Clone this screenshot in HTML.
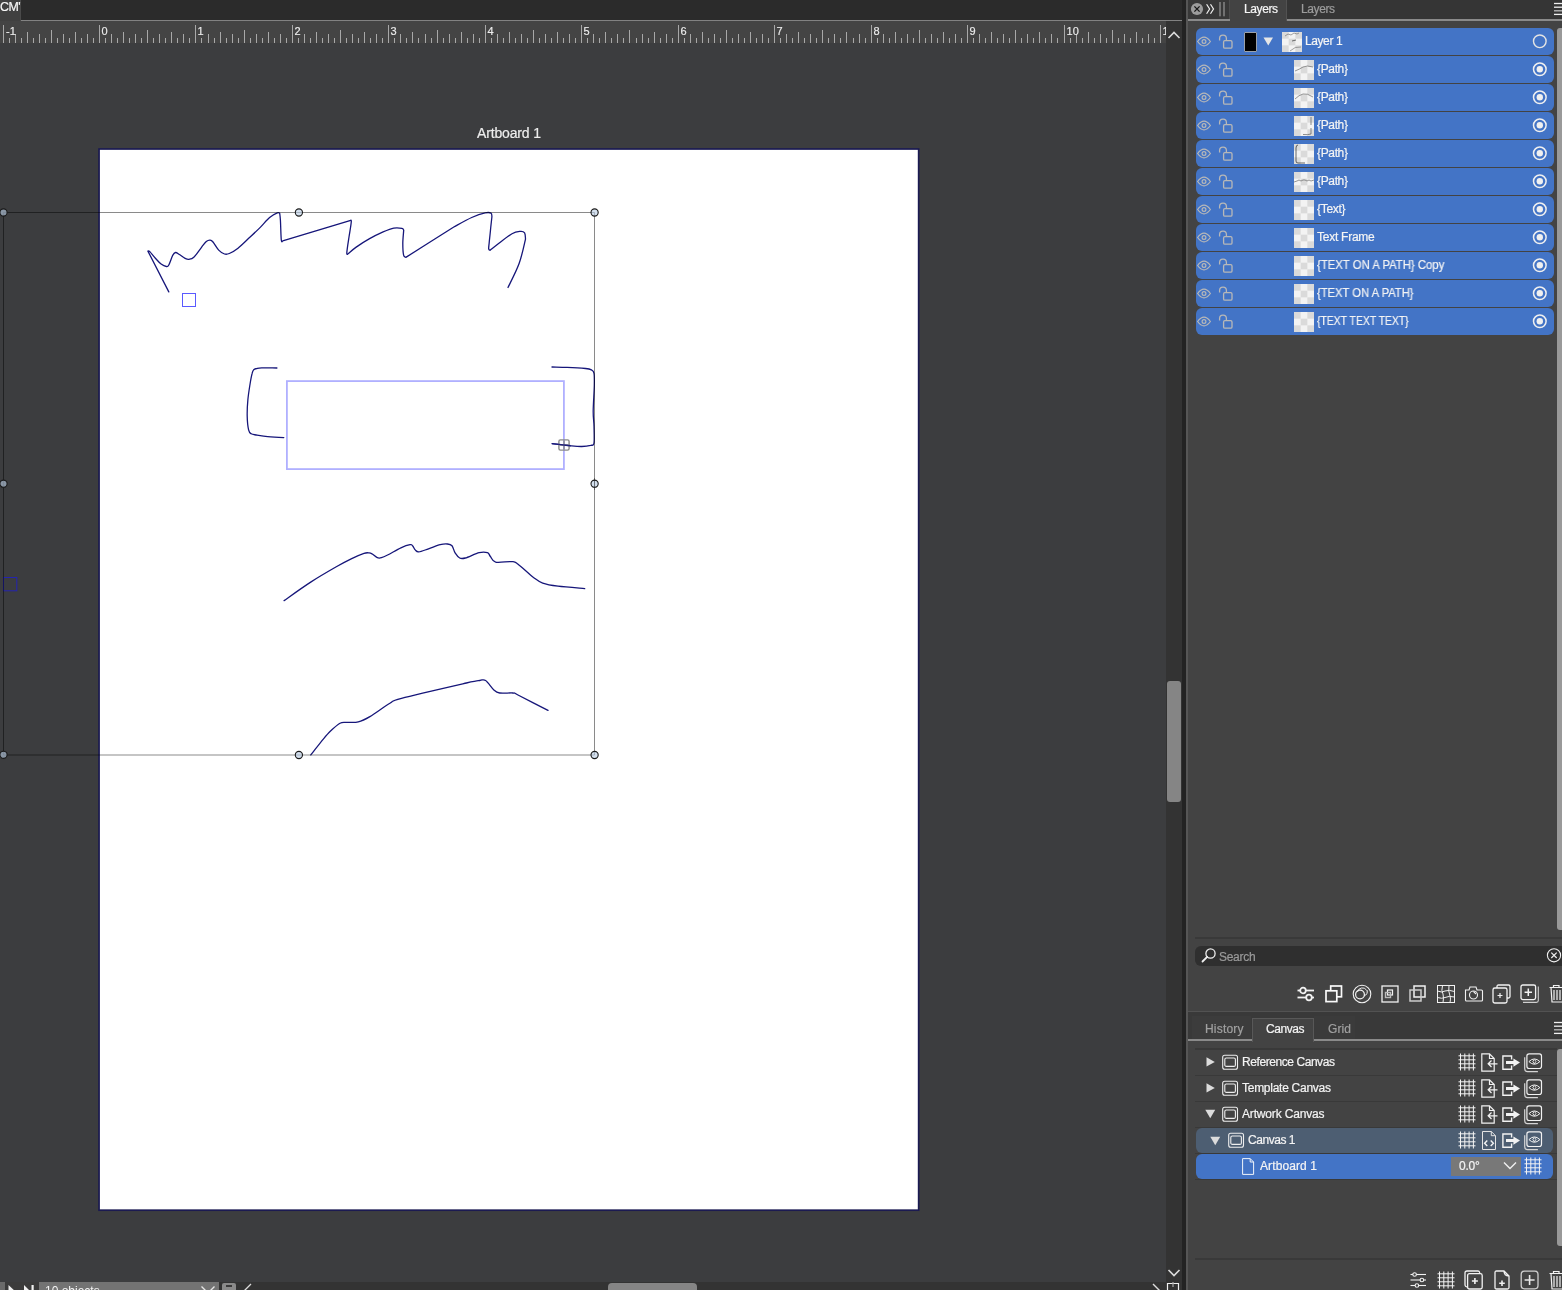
<!DOCTYPE html>
<html><head><meta charset="utf-8"><title>Vector editor</title>
<style>
html,body{margin:0;padding:0;width:1562px;height:1290px;overflow:hidden;background:#3c3d3f;font-family:"Liberation Sans",sans-serif;}
.a{position:absolute}
.lrow{position:absolute;left:1196px;width:358px;height:27px;background:#4374c6;border-radius:6px}
.tx{will-change:transform}
.lt{will-change:transform;-webkit-text-stroke:0.2px currentColor;position:absolute;height:27px;line-height:27px;font-size:12px;color:#f4f4f4;white-space:pre}
</style></head><body>
<!-- canvas area -->
<div class="a" style="left:0;top:0;width:1182px;height:20px;background:#2b2b2b"></div>
<div class="a" style="left:0;top:0;width:20px;height:21px;background:#404040;border-right:1px solid #4a4a4a"></div>
<div class="a tx" style="left:0;top:0;height:20px;line-height:15px;font-size:12.4px;color:#f6f6f6;letter-spacing:-0.45px;-webkit-text-stroke:0.2px #f6f6f6">CM'</div>
<div class="a" style="left:21px;top:20px;width:1161px;height:1px;background:#828282"></div>
<div class="a" style="left:0;top:21px;width:1166px;height:22px;background:#444444"></div>
<div class="a" style="left:0;top:43px;width:1166px;height:1239px;background:#3c3d3f;overflow:hidden">
  <div class="a" style="left:0;top:-43px;width:1166px;height:1282px"><svg width="1166" height="1282" style="position:absolute;left:0;top:0">
<rect x="99.05" y="149" width="819.6" height="1061.2" fill="#fff" stroke="#1b1a52" stroke-width="1.7"/>
<g fill="none" stroke="#16167a" stroke-width="1.3" stroke-linejoin="round" stroke-linecap="round">
<path d="M168.8 291.9 L147.9 251.1 C148.2 251.2 148.3 250.2 149.6 251.4 C150.8 252.6 153.5 256.2 155.4 258.3 C157.3 260.4 159.3 262.7 161.1 264.1 C162.9 265.5 165.1 266.4 166.4 266.5 C167.7 266.6 167.8 266.9 168.8 265.0 C169.9 263.1 171.6 257.5 172.7 255.4 C173.8 253.3 174.4 252.7 175.5 252.5 C176.6 252.3 177.8 253.5 179.4 254.5 C181.0 255.5 183.5 257.5 185.1 258.3 C186.7 259.1 187.6 259.5 189.0 259.3 C190.4 259.1 191.7 259.3 193.8 257.3 C195.9 255.3 199.4 249.9 201.5 247.3 C203.6 244.7 204.9 242.7 206.3 241.5 C207.7 240.3 209.0 240.0 210.1 240.1 C211.2 240.2 211.6 240.3 213.0 242.0 C214.4 243.7 216.8 248.1 218.7 250.1 C220.6 252.1 222.7 253.4 224.5 254.0 C226.3 254.6 227.1 254.5 229.3 253.5 C231.6 252.5 234.5 251.0 238.0 248.2 C241.5 245.4 246.7 240.1 250.4 236.7 C254.1 233.3 256.8 230.8 260.0 227.6 C263.2 224.4 266.7 219.9 269.6 217.5 C272.5 215.1 275.6 213.6 277.3 212.9 C279.0 212.2 279.3 213.1 279.7 213.2 C279.8 214.3 280.1 215.5 280.4 220.0 C280.7 224.5 280.9 236.5 281.3 240.0 C281.7 243.5 282.5 240.8 282.7 240.9 L349.9 220.7 C350.1 220.8 351.4 218.9 351.3 221.6 C351.2 224.3 349.8 231.8 349.0 237.0 C348.2 242.2 346.9 250.2 346.8 253.0 C346.7 255.8 347.9 253.7 348.1 253.8 C349.5 252.7 352.6 249.6 356.2 247.1 C359.8 244.6 365.1 241.1 369.6 238.6 C374.1 236.1 379.1 233.7 383.1 231.9 C387.1 230.2 390.7 228.7 393.8 228.1 C396.9 227.5 400.2 228.0 401.9 228.3 C403.5 228.6 403.4 229.8 403.7 230.1 C403.6 232.3 402.8 239.3 402.8 243.5 C402.8 247.7 403.1 252.9 403.6 255.2 C404.1 257.5 405.4 257.0 405.8 257.4 L426.9 244.0 L453.8 227.0 C456.8 225.4 466.5 219.8 471.7 217.5 C476.9 215.2 481.9 213.6 485.1 212.9 C488.3 212.2 489.9 212.5 491.0 213.1 C492.1 213.7 491.8 216.1 491.9 216.7 C491.7 218.9 490.9 225.7 490.5 230.0 C490.1 234.3 489.5 239.4 489.2 242.6 C488.9 245.8 488.5 247.6 488.7 248.9 C488.9 250.2 489.9 250.1 490.1 250.3 C491.5 249.2 495.0 246.3 498.6 243.5 C502.2 240.7 508.4 235.7 512.0 233.7 C515.6 231.7 518.0 231.6 520.1 231.4 C522.2 231.2 523.7 231.5 524.6 232.8 C525.5 234.1 525.4 238.1 525.5 239.1 C524.5 243.1 522.1 255.2 519.2 263.3 C516.3 271.4 509.9 283.5 508.0 287.5"/>
<path d="M276.9 368.0 C274.4 368.0 265.1 367.7 261.7 367.8 C258.3 367.9 257.8 368.3 256.5 368.6 C255.2 368.9 254.5 368.9 253.8 369.7 C253.1 370.5 252.8 370.6 252.2 373.2 C251.5 375.8 250.6 380.6 249.9 385.0 C249.2 389.4 248.4 394.3 247.9 399.5 C247.4 404.7 247.1 410.9 247.2 416.0 C247.3 421.1 247.9 426.8 248.6 429.8 C249.3 432.8 249.8 432.9 251.2 433.8 C252.6 434.7 254.4 434.6 257.1 435.1 C259.9 435.6 263.2 436.3 267.7 436.7 C272.1 437.1 281.1 437.5 283.8 437.6"/>
<path d="M552.0 367.0 C554.5 367.1 561.5 367.1 567.1 367.4 C572.7 367.6 581.5 368.1 585.5 368.5 C589.5 368.9 590.0 369.1 591.4 369.9 C592.8 370.7 593.5 370.6 594.0 373.3 C594.5 376.0 594.4 379.4 594.3 385.8 C594.2 392.2 593.2 404.8 593.2 411.5 C593.2 418.2 593.9 421.0 594.0 426.3 C594.1 431.6 594.5 440.0 594.0 443.2 C593.5 446.4 592.7 444.8 590.7 445.4 C588.7 445.9 585.1 446.4 581.8 446.5 C578.5 446.6 575.8 446.3 570.8 445.8 C565.8 445.3 555.1 444.0 552.0 443.6"/>
<path d="M284.1 600.6 C288.5 597.5 302.0 587.7 310.7 582.1 C319.4 576.5 329.5 570.7 336.3 566.8 C343.1 562.9 347.1 560.8 351.7 558.6 C356.3 556.4 361.1 554.4 364.0 553.4 C366.9 552.4 367.7 552.8 369.1 552.9 C370.5 553.0 370.8 553.2 372.2 554.0 C373.6 554.8 375.8 557.1 377.3 557.7 C378.8 558.3 379.7 558.2 381.4 557.7 C383.1 557.2 384.4 556.6 387.6 555.0 C390.9 553.4 397.1 549.5 400.9 547.8 C404.6 546.1 408.2 545.0 410.1 544.7 C412.1 544.4 411.8 544.9 412.6 545.8 C413.5 546.7 414.2 548.9 415.2 549.9 C416.2 550.9 416.6 552.1 418.8 551.9 C421.0 551.7 424.9 550.0 428.5 548.8 C432.1 547.6 437.1 545.5 440.2 544.7 C443.3 543.9 445.4 543.8 447.4 544.0 C449.4 544.2 450.7 544.3 452.0 545.8 C453.3 547.3 453.8 550.9 455.1 552.9 C456.4 554.9 458.0 557.1 459.7 558.0 C461.4 558.9 462.1 558.9 465.3 558.0 C468.6 557.1 475.5 553.5 479.2 552.6 C482.9 551.7 485.5 552.0 487.4 552.6 C489.3 553.2 489.0 554.9 490.4 556.5 C491.8 558.1 492.0 561.2 495.6 562.1 C499.2 563.0 508.2 561.2 512.0 561.6 C515.8 562.0 514.5 561.6 518.1 564.2 C521.7 566.9 529.4 574.4 533.5 577.5 C537.6 580.6 538.6 581.6 542.7 583.1 C546.8 584.6 551.0 585.3 558.0 586.2 C565.0 587.1 580.2 588.2 584.7 588.6"/>
<path d="M310.8 754.9 C312.9 752.3 320.0 743.1 323.3 739.1 C326.6 735.1 328.0 733.4 330.8 730.8 C333.6 728.2 337.4 724.7 340.0 723.3 C342.6 721.9 343.6 722.6 346.6 722.4 C349.7 722.2 354.4 722.9 358.3 721.9 C362.2 720.9 364.6 719.7 369.9 716.6 C375.2 713.5 384.6 706.3 389.9 703.3 C395.2 700.2 388.8 701.7 401.5 698.3 C414.2 694.9 453.3 686.0 466.4 683.0 C479.4 680.0 476.6 680.9 479.8 680.5 C483.0 680.1 483.2 678.9 485.6 680.5 C488.0 682.1 491.5 687.9 493.9 690.0 C496.2 692.1 496.5 692.5 499.7 693.0 C502.9 693.5 509.9 692.7 513.0 693.0 C516.0 693.3 512.2 692.1 518.0 695.0 C523.8 697.9 543.0 707.8 548.0 710.4"/>
</g>
<rect x="286.9" y="381.1" width="277" height="88" fill="none" stroke="#b0b0ff" stroke-width="1.8"/>
<rect x="182.5" y="293.5" width="13" height="13" fill="none" stroke="#5a5aff" stroke-width="1"/>
<rect x="3.5" y="577.5" width="13.3" height="13.3" fill="none" stroke="#2424b0" stroke-width="1"/>
<g fill="none" stroke="rgba(0,0,0,0.46)" stroke-width="1">
<line x1="3.5" y1="212.5" x2="594.5" y2="212.5"/>
<line x1="3.5" y1="755" x2="594.5" y2="755"/>
<line x1="3.5" y1="212.5" x2="3.5" y2="755"/>
<line x1="594.5" y1="212.5" x2="594.5" y2="755"/>
</g>
<g stroke="#1a1a1a" stroke-width="1.1" fill="rgba(185,205,228,0.62)">
<circle cx="3.5" cy="212.5" r="3.6"/><circle cx="298.9" cy="212.5" r="3.6"/><circle cx="594.6" cy="212.5" r="3.6"/>
<circle cx="3.5" cy="483.7" r="3.6"/><circle cx="594.6" cy="483.7" r="3.6"/>
<circle cx="3.5" cy="754.8" r="3.6"/><circle cx="298.9" cy="755" r="3.6"/><circle cx="594.6" cy="755" r="3.6"/>
</g>
<line x1="594.5" y1="478" x2="594.5" y2="490" stroke="rgba(0,0,0,0.35)" stroke-width="1"/>
<g fill="none" stroke="#8a8a8a" stroke-width="1.4"><rect x="558.9" y="439.9" width="10.2" height="10.2" rx="1.5"/><line x1="564" y1="440.5" x2="564" y2="449.5"/><line x1="559.5" y1="445" x2="568.5" y2="445"/></g>
<path d="M552 443.6 C556 444 560 444.5 570.8 445.8" fill="none" stroke="#16167a" stroke-width="1.4" opacity="0.9"/>
</svg></div>
  <div class="a tx" style="left:477px;top:82px;font-size:14px;line-height:16px;color:#ededed;letter-spacing:-0.15px;-webkit-text-stroke:0.2px #ededed">Artboard 1</div>
</div>
<svg class="a tx" style="left:0;top:0" width="1166" height="43"><g stroke="#a8a8a8" stroke-width="1"><line x1="3.5" y1="25" x2="3.5" y2="43"/><line x1="9.5" y1="38" x2="9.5" y2="43"/><line x1="15.5" y1="34" x2="15.5" y2="43"/><line x1="21.5" y1="38" x2="21.5" y2="43"/><line x1="27.5" y1="32" x2="27.5" y2="43"/><line x1="33.5" y1="38" x2="33.5" y2="43"/><line x1="39.5" y1="34" x2="39.5" y2="43"/><line x1="45.5" y1="38" x2="45.5" y2="43"/><line x1="51.5" y1="30" x2="51.5" y2="43"/><line x1="57.5" y1="38" x2="57.5" y2="43"/><line x1="63.5" y1="34" x2="63.5" y2="43"/><line x1="69.5" y1="38" x2="69.5" y2="43"/><line x1="75.5" y1="32" x2="75.5" y2="43"/><line x1="81.5" y1="38" x2="81.5" y2="43"/><line x1="87.5" y1="34" x2="87.5" y2="43"/><line x1="93.5" y1="38" x2="93.5" y2="43"/><line x1="99.5" y1="25" x2="99.5" y2="43"/><line x1="105.5" y1="38" x2="105.5" y2="43"/><line x1="111.5" y1="34" x2="111.5" y2="43"/><line x1="117.5" y1="38" x2="117.5" y2="43"/><line x1="123.5" y1="32" x2="123.5" y2="43"/><line x1="129.5" y1="38" x2="129.5" y2="43"/><line x1="135.5" y1="34" x2="135.5" y2="43"/><line x1="141.5" y1="38" x2="141.5" y2="43"/><line x1="147.5" y1="30" x2="147.5" y2="43"/><line x1="153.5" y1="38" x2="153.5" y2="43"/><line x1="159.5" y1="34" x2="159.5" y2="43"/><line x1="165.5" y1="38" x2="165.5" y2="43"/><line x1="171.5" y1="32" x2="171.5" y2="43"/><line x1="177.5" y1="38" x2="177.5" y2="43"/><line x1="183.5" y1="34" x2="183.5" y2="43"/><line x1="189.5" y1="38" x2="189.5" y2="43"/><line x1="195.5" y1="25" x2="195.5" y2="43"/><line x1="201.5" y1="38" x2="201.5" y2="43"/><line x1="208.5" y1="34" x2="208.5" y2="43"/><line x1="214.5" y1="38" x2="214.5" y2="43"/><line x1="220.5" y1="32" x2="220.5" y2="43"/><line x1="226.5" y1="38" x2="226.5" y2="43"/><line x1="232.5" y1="34" x2="232.5" y2="43"/><line x1="238.5" y1="38" x2="238.5" y2="43"/><line x1="244.5" y1="30" x2="244.5" y2="43"/><line x1="250.5" y1="38" x2="250.5" y2="43"/><line x1="256.5" y1="34" x2="256.5" y2="43"/><line x1="262.5" y1="38" x2="262.5" y2="43"/><line x1="268.5" y1="32" x2="268.5" y2="43"/><line x1="274.5" y1="38" x2="274.5" y2="43"/><line x1="280.5" y1="34" x2="280.5" y2="43"/><line x1="286.5" y1="38" x2="286.5" y2="43"/><line x1="292.5" y1="25" x2="292.5" y2="43"/><line x1="298.5" y1="38" x2="298.5" y2="43"/><line x1="304.5" y1="34" x2="304.5" y2="43"/><line x1="310.5" y1="38" x2="310.5" y2="43"/><line x1="316.5" y1="32" x2="316.5" y2="43"/><line x1="322.5" y1="38" x2="322.5" y2="43"/><line x1="328.5" y1="34" x2="328.5" y2="43"/><line x1="334.5" y1="38" x2="334.5" y2="43"/><line x1="340.5" y1="30" x2="340.5" y2="43"/><line x1="346.5" y1="38" x2="346.5" y2="43"/><line x1="352.5" y1="34" x2="352.5" y2="43"/><line x1="358.5" y1="38" x2="358.5" y2="43"/><line x1="364.5" y1="32" x2="364.5" y2="43"/><line x1="370.5" y1="38" x2="370.5" y2="43"/><line x1="376.5" y1="34" x2="376.5" y2="43"/><line x1="382.5" y1="38" x2="382.5" y2="43"/><line x1="388.5" y1="25" x2="388.5" y2="43"/><line x1="394.5" y1="38" x2="394.5" y2="43"/><line x1="400.5" y1="34" x2="400.5" y2="43"/><line x1="406.5" y1="38" x2="406.5" y2="43"/><line x1="412.5" y1="32" x2="412.5" y2="43"/><line x1="418.5" y1="38" x2="418.5" y2="43"/><line x1="425.5" y1="34" x2="425.5" y2="43"/><line x1="431.5" y1="38" x2="431.5" y2="43"/><line x1="437.5" y1="30" x2="437.5" y2="43"/><line x1="443.5" y1="38" x2="443.5" y2="43"/><line x1="449.5" y1="34" x2="449.5" y2="43"/><line x1="455.5" y1="38" x2="455.5" y2="43"/><line x1="461.5" y1="32" x2="461.5" y2="43"/><line x1="467.5" y1="38" x2="467.5" y2="43"/><line x1="473.5" y1="34" x2="473.5" y2="43"/><line x1="479.5" y1="38" x2="479.5" y2="43"/><line x1="485.5" y1="25" x2="485.5" y2="43"/><line x1="491.5" y1="38" x2="491.5" y2="43"/><line x1="497.5" y1="34" x2="497.5" y2="43"/><line x1="503.5" y1="38" x2="503.5" y2="43"/><line x1="509.5" y1="32" x2="509.5" y2="43"/><line x1="515.5" y1="38" x2="515.5" y2="43"/><line x1="521.5" y1="34" x2="521.5" y2="43"/><line x1="527.5" y1="38" x2="527.5" y2="43"/><line x1="533.5" y1="30" x2="533.5" y2="43"/><line x1="539.5" y1="38" x2="539.5" y2="43"/><line x1="545.5" y1="34" x2="545.5" y2="43"/><line x1="551.5" y1="38" x2="551.5" y2="43"/><line x1="557.5" y1="32" x2="557.5" y2="43"/><line x1="563.5" y1="38" x2="563.5" y2="43"/><line x1="569.5" y1="34" x2="569.5" y2="43"/><line x1="575.5" y1="38" x2="575.5" y2="43"/><line x1="581.5" y1="25" x2="581.5" y2="43"/><line x1="587.5" y1="38" x2="587.5" y2="43"/><line x1="593.5" y1="34" x2="593.5" y2="43"/><line x1="599.5" y1="38" x2="599.5" y2="43"/><line x1="605.5" y1="32" x2="605.5" y2="43"/><line x1="611.5" y1="38" x2="611.5" y2="43"/><line x1="617.5" y1="34" x2="617.5" y2="43"/><line x1="623.5" y1="38" x2="623.5" y2="43"/><line x1="629.5" y1="30" x2="629.5" y2="43"/><line x1="636.5" y1="38" x2="636.5" y2="43"/><line x1="642.5" y1="34" x2="642.5" y2="43"/><line x1="648.5" y1="38" x2="648.5" y2="43"/><line x1="654.5" y1="32" x2="654.5" y2="43"/><line x1="660.5" y1="38" x2="660.5" y2="43"/><line x1="666.5" y1="34" x2="666.5" y2="43"/><line x1="672.5" y1="38" x2="672.5" y2="43"/><line x1="678.5" y1="25" x2="678.5" y2="43"/><line x1="684.5" y1="38" x2="684.5" y2="43"/><line x1="690.5" y1="34" x2="690.5" y2="43"/><line x1="696.5" y1="38" x2="696.5" y2="43"/><line x1="702.5" y1="32" x2="702.5" y2="43"/><line x1="708.5" y1="38" x2="708.5" y2="43"/><line x1="714.5" y1="34" x2="714.5" y2="43"/><line x1="720.5" y1="38" x2="720.5" y2="43"/><line x1="726.5" y1="30" x2="726.5" y2="43"/><line x1="732.5" y1="38" x2="732.5" y2="43"/><line x1="738.5" y1="34" x2="738.5" y2="43"/><line x1="744.5" y1="38" x2="744.5" y2="43"/><line x1="750.5" y1="32" x2="750.5" y2="43"/><line x1="756.5" y1="38" x2="756.5" y2="43"/><line x1="762.5" y1="34" x2="762.5" y2="43"/><line x1="768.5" y1="38" x2="768.5" y2="43"/><line x1="774.5" y1="25" x2="774.5" y2="43"/><line x1="780.5" y1="38" x2="780.5" y2="43"/><line x1="786.5" y1="34" x2="786.5" y2="43"/><line x1="792.5" y1="38" x2="792.5" y2="43"/><line x1="798.5" y1="32" x2="798.5" y2="43"/><line x1="804.5" y1="38" x2="804.5" y2="43"/><line x1="810.5" y1="34" x2="810.5" y2="43"/><line x1="816.5" y1="38" x2="816.5" y2="43"/><line x1="822.5" y1="30" x2="822.5" y2="43"/><line x1="828.5" y1="38" x2="828.5" y2="43"/><line x1="834.5" y1="34" x2="834.5" y2="43"/><line x1="840.5" y1="38" x2="840.5" y2="43"/><line x1="846.5" y1="32" x2="846.5" y2="43"/><line x1="853.5" y1="38" x2="853.5" y2="43"/><line x1="859.5" y1="34" x2="859.5" y2="43"/><line x1="865.5" y1="38" x2="865.5" y2="43"/><line x1="871.5" y1="25" x2="871.5" y2="43"/><line x1="877.5" y1="38" x2="877.5" y2="43"/><line x1="883.5" y1="34" x2="883.5" y2="43"/><line x1="889.5" y1="38" x2="889.5" y2="43"/><line x1="895.5" y1="32" x2="895.5" y2="43"/><line x1="901.5" y1="38" x2="901.5" y2="43"/><line x1="907.5" y1="34" x2="907.5" y2="43"/><line x1="913.5" y1="38" x2="913.5" y2="43"/><line x1="919.5" y1="30" x2="919.5" y2="43"/><line x1="925.5" y1="38" x2="925.5" y2="43"/><line x1="931.5" y1="34" x2="931.5" y2="43"/><line x1="937.5" y1="38" x2="937.5" y2="43"/><line x1="943.5" y1="32" x2="943.5" y2="43"/><line x1="949.5" y1="38" x2="949.5" y2="43"/><line x1="955.5" y1="34" x2="955.5" y2="43"/><line x1="961.5" y1="38" x2="961.5" y2="43"/><line x1="967.5" y1="25" x2="967.5" y2="43"/><line x1="973.5" y1="38" x2="973.5" y2="43"/><line x1="979.5" y1="34" x2="979.5" y2="43"/><line x1="985.5" y1="38" x2="985.5" y2="43"/><line x1="991.5" y1="32" x2="991.5" y2="43"/><line x1="997.5" y1="38" x2="997.5" y2="43"/><line x1="1003.5" y1="34" x2="1003.5" y2="43"/><line x1="1009.5" y1="38" x2="1009.5" y2="43"/><line x1="1015.5" y1="30" x2="1015.5" y2="43"/><line x1="1021.5" y1="38" x2="1021.5" y2="43"/><line x1="1027.5" y1="34" x2="1027.5" y2="43"/><line x1="1033.5" y1="38" x2="1033.5" y2="43"/><line x1="1039.5" y1="32" x2="1039.5" y2="43"/><line x1="1045.5" y1="38" x2="1045.5" y2="43"/><line x1="1051.5" y1="34" x2="1051.5" y2="43"/><line x1="1057.5" y1="38" x2="1057.5" y2="43"/><line x1="1064.5" y1="25" x2="1064.5" y2="43"/><line x1="1070.5" y1="38" x2="1070.5" y2="43"/><line x1="1076.5" y1="34" x2="1076.5" y2="43"/><line x1="1082.5" y1="38" x2="1082.5" y2="43"/><line x1="1088.5" y1="32" x2="1088.5" y2="43"/><line x1="1094.5" y1="38" x2="1094.5" y2="43"/><line x1="1100.5" y1="34" x2="1100.5" y2="43"/><line x1="1106.5" y1="38" x2="1106.5" y2="43"/><line x1="1112.5" y1="30" x2="1112.5" y2="43"/><line x1="1118.5" y1="38" x2="1118.5" y2="43"/><line x1="1124.5" y1="34" x2="1124.5" y2="43"/><line x1="1130.5" y1="38" x2="1130.5" y2="43"/><line x1="1136.5" y1="32" x2="1136.5" y2="43"/><line x1="1142.5" y1="38" x2="1142.5" y2="43"/><line x1="1148.5" y1="34" x2="1148.5" y2="43"/><line x1="1154.5" y1="38" x2="1154.5" y2="43"/><line x1="1160.5" y1="25" x2="1160.5" y2="43"/></g><g fill="#ededed" stroke="#ededed" stroke-width="0.15" font-family="Liberation Sans" font-size="11"><text x="6.0" y="35">-1</text><text x="101.6" y="35">0</text><text x="197.6" y="35">1</text><text x="294.6" y="35">2</text><text x="390.6" y="35">3</text><text x="487.6" y="35">4</text><text x="583.6" y="35">5</text><text x="680.6" y="35">6</text><text x="776.6" y="35">7</text><text x="873.6" y="35">8</text><text x="969.6" y="35">9</text><text x="1066.6" y="35">10</text><text x="1162.6" y="35">11</text></g></svg>
<!-- vertical scrollbar -->
<div class="a" style="left:1166px;top:21px;width:16px;height:1261px;background:#333333"></div>
<svg class="a" style="left:1167px;top:30px" width="14" height="10"><path d="M1.5 8 L7 2.5 L12.5 8" fill="none" stroke="#dcdcdc" stroke-width="1.6"/></svg>
<svg class="a" style="left:1167px;top:1268px" width="14" height="10"><path d="M1.5 2 L7 7.5 L12.5 2" fill="none" stroke="#dcdcdc" stroke-width="1.6"/></svg>
<div class="a" style="left:1167px;top:681px;width:14px;height:121px;background:#858585;border-radius:3px"></div>
<!-- status bar -->
<div class="a" style="left:0;top:1282px;width:1182px;height:8px;background:#333333"></div>
<div class="a" style="left:0;top:1282px;width:5px;height:8px;background:#6a6a6a"></div>
<div class="a" style="left:5px;top:1282px;width:34px;height:8px;background:#3b3b3b"></div>
<svg class="a" style="left:6px;top:1282px" width="32" height="8"><path d="M2.5 3 L10 10 L2.5 17Z" fill="#f0f0f0"/><path d="M18 3 L25 10 L18 17Z" fill="#f0f0f0"/><rect x="25.5" y="3" width="2.2" height="8" fill="#f0f0f0"/></svg>
<div class="a" style="left:39px;top:1282px;width:180px;height:8px;background:#737373;overflow:hidden"><div class="a tx" style="left:6px;top:2px;font-size:12px;line-height:14px;color:#f4f4f4">10 objects</div></div>
<svg class="a" style="left:200px;top:1284px" width="16" height="6"><path d="M1.5 2.5 L8 9 L14.5 2.5" fill="none" stroke="#e6e6e6" stroke-width="1.4"/></svg>
<div class="a" style="left:222px;top:1283px;width:14px;height:7px;background:#8a8a8a;border-radius:2px 2px 0 0"></div>
<div class="a" style="left:226px;top:1285px;width:6px;height:2px;background:#3a3a3a"></div>
<svg class="a" style="left:242px;top:1283px" width="10" height="7"><path d="M1 9 L9 1" stroke="#dcdcdc" stroke-width="1.3"/></svg>
<div class="a" style="left:608px;top:1283px;width:89px;height:7px;background:#858585;border-radius:4px 4px 0 0"></div>
<svg class="a" style="left:1150px;top:1282px" width="32" height="8"><path d="M3 2 L10 9" stroke="#dcdcdc" stroke-width="1.4"/><g fill="none" stroke="#f0f0f0" stroke-width="1.2"><path d="M17.5 8 V1.5 H28.5 V8"/><path d="M23 0 V5" stroke="#aaa"/></g></svg>
<!-- dividers -->
<div class="a" style="left:1182px;top:0;width:4px;height:1290px;background:#232323"></div>
<div class="a" style="left:1186px;top:0;width:2px;height:1290px;background:#565656"></div>
<!-- right panel -->
<div class="a" style="left:1188px;top:0;width:374px;height:1290px;background:#434343"></div>
<div class="a" style="left:1188px;top:0;width:374px;height:19px;background:#353535"></div>
<div class="a" style="left:1188px;top:0;width:41px;height:19px;background:#383838;border-right:1px solid #4c4c4c"></div>
<div class="a" style="left:1188px;top:19px;width:42px;height:2px;background:#8a8a8a"></div>
<div class="a" style="left:1287px;top:19px;width:275px;height:2px;background:#8a8a8a"></div>
<div class="a" style="left:1230px;top:0;width:56px;height:21px;background:#434343"></div>
<div class="a" style="left:1286px;top:0;width:1px;height:21px;background:#525252"></div>
<svg class="a" style="left:1190px;top:2px" width="38" height="16"><circle cx="7" cy="7" r="6.1" fill="#9c9c9c"/><path d="M4.4 4.4 L9.6 9.6 M9.6 4.4 L4.4 9.6" stroke="#151515" stroke-width="1.3"/><path d="M16.6 2.3 L19.6 7 L16.6 11.7 M20.5 2.3 L23.5 7 L20.5 11.7" fill="none" stroke="#f0f0f0" stroke-width="1.2"/><rect x="29" y="0" width="2" height="14.3" fill="#717171"/><rect x="33" y="0" width="2" height="14.3" fill="#717171"/></svg>
<div class="lt" style="left:1244px;top:0;height:18px;line-height:18px;color:#f6f6f6;letter-spacing:-0.4px">Layers</div>
<div class="lt" style="left:1301px;top:0;height:18px;line-height:18px;color:#9c9c9c;letter-spacing:-0.4px">Layers</div>
<svg class="a" style="left:1554px;top:2px" width="8" height="14"><g stroke="#f0f0f0" stroke-width="1.3"><line x1="0" y1="1.5" x2="8" y2="1.5"/><line x1="0" y1="5.2" x2="8" y2="5.2"/><line x1="0" y1="8.8" x2="8" y2="8.8" stroke="#bdbdbd"/><line x1="0" y1="12.4" x2="8" y2="12.4"/></g></svg>
<div class="lrow" style="top:28px"></div><svg style="position:absolute;left:1197px;top:34px" width="15" height="15" viewBox="0 0 15 15"><g fill="none" stroke="#b8b8b8" stroke-width="1.2"><path d="M0.6 7.5 Q7 -1.3 13.4 7.5 Q7 16.3 0.6 7.5Z"/><circle cx="7" cy="7.5" r="1.9"/></g></svg><svg style="position:absolute;left:1218px;top:34px" width="16" height="16" viewBox="0 0 16 16"><g fill="none" stroke="#b8b8b8" stroke-width="1.3"><path d="M1.6 6.6 V4.6 A3.4 3.4 0 0 1 8.4 4.6 V6.2"/><rect x="5.6" y="6.6" width="8.4" height="7.6" rx="1.3"/></g></svg><div style="position:absolute;left:1244px;top:31.5px;width:11px;height:18px;background:#000;border:1px solid #9aa0a8;border-radius:1px"></div><svg style="position:absolute;left:1263px;top:37px" width="11" height="9"><path d="M0.5 0.5 H10 L5.25 8.5Z" fill="#e6e6e6"/></svg><svg style="position:absolute;left:1282px;top:31.5px" width="20" height="20"><rect width="20" height="20" fill="#f3f3f3"/><rect x="0.00" y="0.00" width="6.67" height="6.67" fill="#dadada"/><rect x="0.00" y="13.34" width="6.67" height="6.67" fill="#dadada"/><rect x="6.67" y="6.67" width="6.67" height="6.67" fill="#dadada"/><rect x="13.34" y="0.00" width="6.67" height="6.67" fill="#dadada"/><rect x="13.34" y="13.34" width="6.67" height="6.67" fill="#dadada"/><g opacity="0.75"><path d="M3 4 L6 2 L9 3 L12 1 L15 2 L17 1" stroke="#555" stroke-width="0.7" fill="none"/><path d="M10 9 L14 8" stroke="#444" stroke-width="1" fill="none"/><path d="M8 19 Q13 14 19 15" stroke="#555" stroke-width="0.7" fill="none"/></g></svg><div class="lt" style="left:1305px;top:28px;letter-spacing:-0.41px">Layer 1</div><svg style="position:absolute;left:1532px;top:34px" width="16" height="16"><circle cx="7.8" cy="7.3" r="6.3" fill="none" stroke="#e4e4e4" stroke-width="1.4"/></svg><div class="lrow" style="top:56px"></div><svg style="position:absolute;left:1197px;top:62px" width="15" height="15" viewBox="0 0 15 15"><g fill="none" stroke="#b8b8b8" stroke-width="1.2"><path d="M0.6 7.5 Q7 -1.3 13.4 7.5 Q7 16.3 0.6 7.5Z"/><circle cx="7" cy="7.5" r="1.9"/></g></svg><svg style="position:absolute;left:1218px;top:62px" width="16" height="16" viewBox="0 0 16 16"><g fill="none" stroke="#b8b8b8" stroke-width="1.3"><path d="M1.6 6.6 V4.6 A3.4 3.4 0 0 1 8.4 4.6 V6.2"/><rect x="5.6" y="6.6" width="8.4" height="7.6" rx="1.3"/></g></svg><svg style="position:absolute;left:1294px;top:60px" width="20" height="20"><rect width="20" height="20" fill="#f3f3f3"/><rect x="0.00" y="0.00" width="6.67" height="6.67" fill="#dadada"/><rect x="0.00" y="13.34" width="6.67" height="6.67" fill="#dadada"/><rect x="6.67" y="6.67" width="6.67" height="6.67" fill="#dadada"/><rect x="13.34" y="0.00" width="6.67" height="6.67" fill="#dadada"/><rect x="13.34" y="13.34" width="6.67" height="6.67" fill="#dadada"/><g opacity="0.75"><path d="M1 11 Q6 9 9 7 Q13 5 19 7" stroke="#555" stroke-width="0.8" fill="none"/></g></svg><div class="lt" style="left:1317px;top:56px;letter-spacing:-0.35px">{Path}</div><svg style="position:absolute;left:1532px;top:62px" width="16" height="16"><circle cx="7.8" cy="7.3" r="6.3" fill="none" stroke="#f0f0f0" stroke-width="1.5"/><circle cx="7.8" cy="7.3" r="3.2" fill="#f0f0f0"/></svg><div class="lrow" style="top:84px"></div><svg style="position:absolute;left:1197px;top:90px" width="15" height="15" viewBox="0 0 15 15"><g fill="none" stroke="#b8b8b8" stroke-width="1.2"><path d="M0.6 7.5 Q7 -1.3 13.4 7.5 Q7 16.3 0.6 7.5Z"/><circle cx="7" cy="7.5" r="1.9"/></g></svg><svg style="position:absolute;left:1218px;top:90px" width="16" height="16" viewBox="0 0 16 16"><g fill="none" stroke="#b8b8b8" stroke-width="1.3"><path d="M1.6 6.6 V4.6 A3.4 3.4 0 0 1 8.4 4.6 V6.2"/><rect x="5.6" y="6.6" width="8.4" height="7.6" rx="1.3"/></g></svg><svg style="position:absolute;left:1294px;top:88px" width="20" height="20"><rect width="20" height="20" fill="#f3f3f3"/><rect x="0.00" y="0.00" width="6.67" height="6.67" fill="#dadada"/><rect x="0.00" y="13.34" width="6.67" height="6.67" fill="#dadada"/><rect x="6.67" y="6.67" width="6.67" height="6.67" fill="#dadada"/><rect x="13.34" y="0.00" width="6.67" height="6.67" fill="#dadada"/><rect x="13.34" y="13.34" width="6.67" height="6.67" fill="#dadada"/><g opacity="0.75"><path d="M1 11 Q5 7 9 6 Q13 5 19 9" stroke="#555" stroke-width="0.8" fill="none"/></g></svg><div class="lt" style="left:1317px;top:84px;letter-spacing:-0.35px">{Path}</div><svg style="position:absolute;left:1532px;top:90px" width="16" height="16"><circle cx="7.8" cy="7.3" r="6.3" fill="none" stroke="#f0f0f0" stroke-width="1.5"/><circle cx="7.8" cy="7.3" r="3.2" fill="#f0f0f0"/></svg><div class="lrow" style="top:112px"></div><svg style="position:absolute;left:1197px;top:118px" width="15" height="15" viewBox="0 0 15 15"><g fill="none" stroke="#b8b8b8" stroke-width="1.2"><path d="M0.6 7.5 Q7 -1.3 13.4 7.5 Q7 16.3 0.6 7.5Z"/><circle cx="7" cy="7.5" r="1.9"/></g></svg><svg style="position:absolute;left:1218px;top:118px" width="16" height="16" viewBox="0 0 16 16"><g fill="none" stroke="#b8b8b8" stroke-width="1.3"><path d="M1.6 6.6 V4.6 A3.4 3.4 0 0 1 8.4 4.6 V6.2"/><rect x="5.6" y="6.6" width="8.4" height="7.6" rx="1.3"/></g></svg><svg style="position:absolute;left:1294px;top:116px" width="20" height="20"><rect width="20" height="20" fill="#f3f3f3"/><rect x="0.00" y="0.00" width="6.67" height="6.67" fill="#dadada"/><rect x="0.00" y="13.34" width="6.67" height="6.67" fill="#dadada"/><rect x="6.67" y="6.67" width="6.67" height="6.67" fill="#dadada"/><rect x="13.34" y="0.00" width="6.67" height="6.67" fill="#dadada"/><rect x="13.34" y="13.34" width="6.67" height="6.67" fill="#dadada"/><g opacity="0.75"><path d="M17 1 V9 M17 12 V18 Q14 19 9 18.5" stroke="#444" stroke-width="0.8" fill="none"/></g></svg><div class="lt" style="left:1317px;top:112px;letter-spacing:-0.35px">{Path}</div><svg style="position:absolute;left:1532px;top:118px" width="16" height="16"><circle cx="7.8" cy="7.3" r="6.3" fill="none" stroke="#f0f0f0" stroke-width="1.5"/><circle cx="7.8" cy="7.3" r="3.2" fill="#f0f0f0"/></svg><div class="lrow" style="top:140px"></div><svg style="position:absolute;left:1197px;top:146px" width="15" height="15" viewBox="0 0 15 15"><g fill="none" stroke="#b8b8b8" stroke-width="1.2"><path d="M0.6 7.5 Q7 -1.3 13.4 7.5 Q7 16.3 0.6 7.5Z"/><circle cx="7" cy="7.5" r="1.9"/></g></svg><svg style="position:absolute;left:1218px;top:146px" width="16" height="16" viewBox="0 0 16 16"><g fill="none" stroke="#b8b8b8" stroke-width="1.3"><path d="M1.6 6.6 V4.6 A3.4 3.4 0 0 1 8.4 4.6 V6.2"/><rect x="5.6" y="6.6" width="8.4" height="7.6" rx="1.3"/></g></svg><svg style="position:absolute;left:1294px;top:144px" width="20" height="20"><rect width="20" height="20" fill="#f3f3f3"/><rect x="0.00" y="0.00" width="6.67" height="6.67" fill="#dadada"/><rect x="0.00" y="13.34" width="6.67" height="6.67" fill="#dadada"/><rect x="6.67" y="6.67" width="6.67" height="6.67" fill="#dadada"/><rect x="13.34" y="0.00" width="6.67" height="6.67" fill="#dadada"/><rect x="13.34" y="13.34" width="6.67" height="6.67" fill="#dadada"/><g opacity="0.75"><path d="M4 1 Q2 1 2 4 V17 Q2 19 4 19 H11" stroke="#222" stroke-width="0.9" fill="none"/></g></svg><div class="lt" style="left:1317px;top:140px;letter-spacing:-0.35px">{Path}</div><svg style="position:absolute;left:1532px;top:146px" width="16" height="16"><circle cx="7.8" cy="7.3" r="6.3" fill="none" stroke="#f0f0f0" stroke-width="1.5"/><circle cx="7.8" cy="7.3" r="3.2" fill="#f0f0f0"/></svg><div class="lrow" style="top:168px"></div><svg style="position:absolute;left:1197px;top:174px" width="15" height="15" viewBox="0 0 15 15"><g fill="none" stroke="#b8b8b8" stroke-width="1.2"><path d="M0.6 7.5 Q7 -1.3 13.4 7.5 Q7 16.3 0.6 7.5Z"/><circle cx="7" cy="7.5" r="1.9"/></g></svg><svg style="position:absolute;left:1218px;top:174px" width="16" height="16" viewBox="0 0 16 16"><g fill="none" stroke="#b8b8b8" stroke-width="1.3"><path d="M1.6 6.6 V4.6 A3.4 3.4 0 0 1 8.4 4.6 V6.2"/><rect x="5.6" y="6.6" width="8.4" height="7.6" rx="1.3"/></g></svg><svg style="position:absolute;left:1294px;top:172px" width="20" height="20"><rect width="20" height="20" fill="#f3f3f3"/><rect x="0.00" y="0.00" width="6.67" height="6.67" fill="#dadada"/><rect x="0.00" y="13.34" width="6.67" height="6.67" fill="#dadada"/><rect x="6.67" y="6.67" width="6.67" height="6.67" fill="#dadada"/><rect x="13.34" y="0.00" width="6.67" height="6.67" fill="#dadada"/><rect x="13.34" y="13.34" width="6.67" height="6.67" fill="#dadada"/><g opacity="0.75"><path d="M0 10 L3 9 L5 8 L7 9 L9 8 L11 8 L13 9 L15 8 L17 9 L20 8" stroke="#555" stroke-width="0.8" fill="none"/></g></svg><div class="lt" style="left:1317px;top:168px;letter-spacing:-0.35px">{Path}</div><svg style="position:absolute;left:1532px;top:174px" width="16" height="16"><circle cx="7.8" cy="7.3" r="6.3" fill="none" stroke="#f0f0f0" stroke-width="1.5"/><circle cx="7.8" cy="7.3" r="3.2" fill="#f0f0f0"/></svg><div class="lrow" style="top:196px"></div><svg style="position:absolute;left:1197px;top:202px" width="15" height="15" viewBox="0 0 15 15"><g fill="none" stroke="#b8b8b8" stroke-width="1.2"><path d="M0.6 7.5 Q7 -1.3 13.4 7.5 Q7 16.3 0.6 7.5Z"/><circle cx="7" cy="7.5" r="1.9"/></g></svg><svg style="position:absolute;left:1218px;top:202px" width="16" height="16" viewBox="0 0 16 16"><g fill="none" stroke="#b8b8b8" stroke-width="1.3"><path d="M1.6 6.6 V4.6 A3.4 3.4 0 0 1 8.4 4.6 V6.2"/><rect x="5.6" y="6.6" width="8.4" height="7.6" rx="1.3"/></g></svg><svg style="position:absolute;left:1294px;top:200px" width="20" height="20"><rect width="20" height="20" fill="#f3f3f3"/><rect x="0.00" y="0.00" width="6.67" height="6.67" fill="#dadada"/><rect x="0.00" y="13.34" width="6.67" height="6.67" fill="#dadada"/><rect x="6.67" y="6.67" width="6.67" height="6.67" fill="#dadada"/><rect x="13.34" y="0.00" width="6.67" height="6.67" fill="#dadada"/><rect x="13.34" y="13.34" width="6.67" height="6.67" fill="#dadada"/><g opacity="0.75"></g></svg><div class="lt" style="left:1317px;top:196px;letter-spacing:-0.3px">{Text}</div><svg style="position:absolute;left:1532px;top:202px" width="16" height="16"><circle cx="7.8" cy="7.3" r="6.3" fill="none" stroke="#f0f0f0" stroke-width="1.5"/><circle cx="7.8" cy="7.3" r="3.2" fill="#f0f0f0"/></svg><div class="lrow" style="top:224px"></div><svg style="position:absolute;left:1197px;top:230px" width="15" height="15" viewBox="0 0 15 15"><g fill="none" stroke="#b8b8b8" stroke-width="1.2"><path d="M0.6 7.5 Q7 -1.3 13.4 7.5 Q7 16.3 0.6 7.5Z"/><circle cx="7" cy="7.5" r="1.9"/></g></svg><svg style="position:absolute;left:1218px;top:230px" width="16" height="16" viewBox="0 0 16 16"><g fill="none" stroke="#b8b8b8" stroke-width="1.3"><path d="M1.6 6.6 V4.6 A3.4 3.4 0 0 1 8.4 4.6 V6.2"/><rect x="5.6" y="6.6" width="8.4" height="7.6" rx="1.3"/></g></svg><svg style="position:absolute;left:1294px;top:228px" width="20" height="20"><rect width="20" height="20" fill="#f3f3f3"/><rect x="0.00" y="0.00" width="6.67" height="6.67" fill="#dadada"/><rect x="0.00" y="13.34" width="6.67" height="6.67" fill="#dadada"/><rect x="6.67" y="6.67" width="6.67" height="6.67" fill="#dadada"/><rect x="13.34" y="0.00" width="6.67" height="6.67" fill="#dadada"/><rect x="13.34" y="13.34" width="6.67" height="6.67" fill="#dadada"/><g opacity="0.75"></g></svg><div class="lt" style="left:1317px;top:224px;letter-spacing:-0.25px">Text Frame</div><svg style="position:absolute;left:1532px;top:230px" width="16" height="16"><circle cx="7.8" cy="7.3" r="6.3" fill="none" stroke="#f0f0f0" stroke-width="1.5"/><circle cx="7.8" cy="7.3" r="3.2" fill="#f0f0f0"/></svg><div class="lrow" style="top:252px"></div><svg style="position:absolute;left:1197px;top:258px" width="15" height="15" viewBox="0 0 15 15"><g fill="none" stroke="#b8b8b8" stroke-width="1.2"><path d="M0.6 7.5 Q7 -1.3 13.4 7.5 Q7 16.3 0.6 7.5Z"/><circle cx="7" cy="7.5" r="1.9"/></g></svg><svg style="position:absolute;left:1218px;top:258px" width="16" height="16" viewBox="0 0 16 16"><g fill="none" stroke="#b8b8b8" stroke-width="1.3"><path d="M1.6 6.6 V4.6 A3.4 3.4 0 0 1 8.4 4.6 V6.2"/><rect x="5.6" y="6.6" width="8.4" height="7.6" rx="1.3"/></g></svg><svg style="position:absolute;left:1294px;top:256px" width="20" height="20"><rect width="20" height="20" fill="#f3f3f3"/><rect x="0.00" y="0.00" width="6.67" height="6.67" fill="#dadada"/><rect x="0.00" y="13.34" width="6.67" height="6.67" fill="#dadada"/><rect x="6.67" y="6.67" width="6.67" height="6.67" fill="#dadada"/><rect x="13.34" y="0.00" width="6.67" height="6.67" fill="#dadada"/><rect x="13.34" y="13.34" width="6.67" height="6.67" fill="#dadada"/><g opacity="0.75"></g></svg><div class="lt" style="left:1317px;top:252px;transform:scaleX(0.945);transform-origin:0 0">{TEXT ON A PATH} Copy</div><svg style="position:absolute;left:1532px;top:258px" width="16" height="16"><circle cx="7.8" cy="7.3" r="6.3" fill="none" stroke="#f0f0f0" stroke-width="1.5"/><circle cx="7.8" cy="7.3" r="3.2" fill="#f0f0f0"/></svg><div class="lrow" style="top:280px"></div><svg style="position:absolute;left:1197px;top:286px" width="15" height="15" viewBox="0 0 15 15"><g fill="none" stroke="#b8b8b8" stroke-width="1.2"><path d="M0.6 7.5 Q7 -1.3 13.4 7.5 Q7 16.3 0.6 7.5Z"/><circle cx="7" cy="7.5" r="1.9"/></g></svg><svg style="position:absolute;left:1218px;top:286px" width="16" height="16" viewBox="0 0 16 16"><g fill="none" stroke="#b8b8b8" stroke-width="1.3"><path d="M1.6 6.6 V4.6 A3.4 3.4 0 0 1 8.4 4.6 V6.2"/><rect x="5.6" y="6.6" width="8.4" height="7.6" rx="1.3"/></g></svg><svg style="position:absolute;left:1294px;top:284px" width="20" height="20"><rect width="20" height="20" fill="#f3f3f3"/><rect x="0.00" y="0.00" width="6.67" height="6.67" fill="#dadada"/><rect x="0.00" y="13.34" width="6.67" height="6.67" fill="#dadada"/><rect x="6.67" y="6.67" width="6.67" height="6.67" fill="#dadada"/><rect x="13.34" y="0.00" width="6.67" height="6.67" fill="#dadada"/><rect x="13.34" y="13.34" width="6.67" height="6.67" fill="#dadada"/><g opacity="0.75"></g></svg><div class="lt" style="left:1317px;top:280px;transform:scaleX(0.934);transform-origin:0 0">{TEXT ON A PATH}</div><svg style="position:absolute;left:1532px;top:286px" width="16" height="16"><circle cx="7.8" cy="7.3" r="6.3" fill="none" stroke="#f0f0f0" stroke-width="1.5"/><circle cx="7.8" cy="7.3" r="3.2" fill="#f0f0f0"/></svg><div class="lrow" style="top:308px"></div><svg style="position:absolute;left:1197px;top:314px" width="15" height="15" viewBox="0 0 15 15"><g fill="none" stroke="#b8b8b8" stroke-width="1.2"><path d="M0.6 7.5 Q7 -1.3 13.4 7.5 Q7 16.3 0.6 7.5Z"/><circle cx="7" cy="7.5" r="1.9"/></g></svg><svg style="position:absolute;left:1218px;top:314px" width="16" height="16" viewBox="0 0 16 16"><g fill="none" stroke="#b8b8b8" stroke-width="1.3"><path d="M1.6 6.6 V4.6 A3.4 3.4 0 0 1 8.4 4.6 V6.2"/><rect x="5.6" y="6.6" width="8.4" height="7.6" rx="1.3"/></g></svg><svg style="position:absolute;left:1294px;top:312px" width="20" height="20"><rect width="20" height="20" fill="#f3f3f3"/><rect x="0.00" y="0.00" width="6.67" height="6.67" fill="#dadada"/><rect x="0.00" y="13.34" width="6.67" height="6.67" fill="#dadada"/><rect x="6.67" y="6.67" width="6.67" height="6.67" fill="#dadada"/><rect x="13.34" y="0.00" width="6.67" height="6.67" fill="#dadada"/><rect x="13.34" y="13.34" width="6.67" height="6.67" fill="#dadada"/><g opacity="0.75"></g></svg><div class="lt" style="left:1317px;top:308px;transform:scaleX(0.866);transform-origin:0 0">{TEXT TEXT TEXT}</div><svg style="position:absolute;left:1532px;top:314px" width="16" height="16"><circle cx="7.8" cy="7.3" r="6.3" fill="none" stroke="#f0f0f0" stroke-width="1.5"/><circle cx="7.8" cy="7.3" r="3.2" fill="#f0f0f0"/></svg>
<div class="a" style="left:1557px;top:28px;width:5px;height:902px;background:#999999;border-radius:3px 0 0 3px"></div>
<div class="a" style="left:1195px;top:937px;width:367px;height:2px;background:#393939"></div>
<div class="a" style="left:1195px;top:946px;width:367px;height:20px;background:#2f2f2f;border-radius:6px 0 0 6px"></div>
<svg class="a" style="left:1200px;top:946px" width="18" height="18"><circle cx="10.5" cy="7.5" r="4.6" fill="none" stroke="#f0f0f0" stroke-width="1.3"/><path d="M7.2 10.8 L2.5 15.5" stroke="#f0f0f0" stroke-width="1.8" stroke-linecap="round"/></svg>
<div class="lt" style="left:1219px;top:947px;height:20px;line-height:21px;color:#9a9a9a;letter-spacing:-0.28px">Search</div>
<svg class="a" style="left:1545px;top:947px" width="17" height="17"><circle cx="9" cy="8.3" r="6.6" fill="none" stroke="#f0f0f0" stroke-width="1.1"/><path d="M6.3 5.6 L11.7 11 M11.7 5.6 L6.3 11" stroke="#f0f0f0" stroke-width="1.2"/></svg>
<svg style="position:absolute;left:1297px;top:985px" width="18" height="17" viewBox="0 0 18 17"><g stroke="#f2f2f2" stroke-width="1.8" fill="none"><line x1="0.5" y1="5.5" x2="17" y2="5.5"/><line x1="0.5" y1="12.5" x2="17" y2="12.5"/><circle cx="6" cy="5.5" r="2.8" fill="#434343"/><circle cx="12" cy="12.5" r="2.8" fill="#434343"/></g></svg><svg style="position:absolute;left:1325px;top:985px" width="18" height="18" viewBox="0 0 18 18"><g stroke="#fafafa" stroke-width="1.7" fill="none"><rect x="5.7" y="1" width="10.8" height="10.8"/><rect x="1" y="5.8" width="10.8" height="10.8" fill="#434343"/></g></svg><svg style="position:absolute;left:1352px;top:984px" width="20" height="20" viewBox="0 0 20 20"><g stroke="#f2f2f2" fill="none"><circle cx="10" cy="10" r="8.8" stroke-width="1.1"/><circle cx="8" cy="10.5" r="4.4" stroke-width="1.2"/><path d="M5.5 8 A5 5 0 0 1 14.5 6" stroke-width="1"/><path d="M12 12 A5 5 0 0 0 15 6" stroke-width="1"/></g></svg><svg style="position:absolute;left:1381px;top:985px" width="18" height="18" viewBox="0 0 18 18"><g stroke="#f2f2f2" fill="none"><rect x="1" y="1" width="16" height="16" stroke-width="1.3"/><rect x="6.5" y="5" width="5" height="5" stroke-width="1.2"/><rect x="4.5" y="7.5" width="5" height="5" stroke="#bbb" stroke-width="1.4"/></g></svg><svg style="position:absolute;left:1409px;top:985px" width="18" height="18" viewBox="0 0 18 18"><g stroke="#f2f2f2" fill="none" stroke-width="1.5"><rect x="5" y="1" width="11" height="11"/><rect x="1" y="5" width="11" height="11" stroke="#ccc"/></g></svg><svg style="position:absolute;left:1437px;top:985px" width="18" height="18" viewBox="0 0 18 18"><g stroke="#f2f2f2" fill="none" stroke-width="1"><rect x="0.5" y="0.5" width="17" height="17"/><path d="M5.5 0.5 Q4 6 6 9 Q7 13 6 17.5 M12 0.5 Q11 6 13 11 Q14 14 13 17.5 M0.5 6 Q5 8 8 6 Q12 4.5 17.5 6.5 M0.5 12.5 Q5 14 8 12.5 Q12 10.5 17.5 12"/></g></svg><svg style="position:absolute;left:1464px;top:985px" width="20" height="18" viewBox="0 0 20 18"><g stroke="#f2f2f2" fill="none" stroke-width="1.1"><path d="M1.5 5 H5 L6 2 H12 L13 5 H17.5 Q18.5 5 18.5 6 V15 Q18.5 16 17.5 16 H2.5 Q1.5 16 1.5 15Z"/><circle cx="9.5" cy="10" r="4"/><path d="M9.5 6.5 L12 9"/></g></svg><svg style="position:absolute;left:1492px;top:984px" width="20" height="20" viewBox="0 0 20 20"><g stroke="#f2f2f2" fill="none" stroke-width="1.3"><path d="M5 4 V2.5 Q5 1 6.5 1 H16.5 Q18 1 18 2.5 V12.5 Q18 14 16.5 14 H15"/><rect x="1" y="4" width="14" height="15" rx="1.8"/><path d="M8 9 V14 M5.5 11.5 H10.5" stroke-width="1.2"/></g></svg><svg style="position:absolute;left:1520px;top:984px" width="20" height="20" viewBox="0 0 20 20"><g stroke="#f2f2f2" fill="none" stroke-width="1.3"><rect x="1" y="1" width="14.6" height="14.6" rx="1.8"/><path d="M8.3 4.5 V12 M4.6 8.3 H12" stroke-width="1.5"/><path d="M18.3 2.5 V16.5 Q18.3 18.4 16.4 18.4 H3" stroke="#d0d0d0" stroke-width="1.1"/></g></svg><svg style="position:absolute;left:1549px;top:984px" width="13" height="20" viewBox="0 0 13 20"><g stroke="#f2f2f2" fill="none" stroke-width="1.2"><path d="M0.5 3.5 H13 M4.5 3.5 V1.5 H10 V3.5 M2 3.5 L3 18 H13 M5 6 V16 M8 6 V16 M11 6 V16"/></g></svg>
<div class="a" style="left:1188px;top:1011px;width:374px;height:1px;background:#525252"></div>
<div class="a" style="left:1188px;top:1012px;width:374px;height:28px;background:#393939"></div>
<div class="a" style="left:1192px;top:1016px;width:59px;height:24px;background:#3c3c3c"></div>
<div class="a" style="left:1314px;top:1016px;width:41px;height:24px;background:#3b3b3b"></div>
<div class="a" style="left:1188px;top:1039px;width:374px;height:2px;background:#8a8a8a"></div>
<div class="a" style="left:1252px;top:1018px;width:60px;height:23px;background:#434343;border:1px solid #585858;border-bottom:none"></div>
<div class="lt" style="left:1205px;top:1016px;height:26px;line-height:26px;color:#a0a0a0;letter-spacing:0.2px">History</div>
<div class="lt" style="left:1266px;top:1016px;height:26px;line-height:26px;color:#f4f4f4;letter-spacing:-0.42px">Canvas</div>
<div class="lt" style="left:1328px;top:1016px;height:26px;line-height:26px;color:#a0a0a0;letter-spacing:0.1px">Grid</div>
<svg class="a" style="left:1554px;top:1021px" width="8" height="14"><g stroke="#f0f0f0" stroke-width="1.3"><line x1="0" y1="1.5" x2="8" y2="1.5"/><line x1="0" y1="5.2" x2="8" y2="5.2"/><line x1="0" y1="8.8" x2="8" y2="8.8" stroke="#bdbdbd"/><line x1="0" y1="12.4" x2="8" y2="12.4"/></g></svg>
<div class="a" style="left:1195px;top:1048px;width:362px;height:2px;background:#393939"></div>
<div class="a" style="left:1195px;top:1075px;width:362px;height:1px;background:#393939"></div>
<div class="a" style="left:1195px;top:1101px;width:362px;height:1px;background:#393939"></div>
<div class="a" style="left:1195px;top:1127px;width:362px;height:1px;background:#393939"></div>
<div class="a" style="left:1195px;top:1153px;width:362px;height:1px;background:#393939"></div>
<div class="a" style="left:1195px;top:1179px;width:362px;height:1px;background:#393939"></div>
<svg style="position:absolute;left:1206px;top:1057px" width="10" height="10" viewBox="0 0 10 10"><path d="M0.5 0.3 L8.8 4.9 L0.5 9.5Z" fill="#dcdcdc"/></svg><svg style="position:absolute;left:1222px;top:1054px" width="17" height="17" viewBox="0 0 17 17"><g fill="none" stroke="#eeeeee" stroke-width="1.1"><rect x="0.7" y="1.3" width="14.8" height="14" rx="2"/><rect x="2.8" y="4" width="10.6" height="8.4" rx="1.5"/></g></svg><div class="lt" style="left:1242px;top:1049px;height:26px;line-height:26px;letter-spacing:-0.43px">Reference Canvas</div><svg style="position:absolute;left:1458px;top:1053px" width="18" height="18" viewBox="0 0 18 18"><g stroke="#f4f4f4" stroke-width="1" fill="none"><path d="M2.5 0.5 V17.5 M6.8 0.5 V17.5 M11.1 0.5 V17.5 M15.4 0.5 V17.5 M0.5 2.8 H17.5 M0.5 6.8 H17.5 M0.5 10.8 H17.5 M0.5 14.8 H17.5"/></g></svg><svg style="position:absolute;left:1481px;top:1053px" width="18" height="19" viewBox="0 0 18 19"><g stroke="#f2f2f2" fill="none" stroke-width="1.2"><path d="M0.8 0.8 H8.5 L13.2 5.5 V18.2 H0.8Z M8.5 0.8 V5.5 H13.2"/><path d="M16.5 10.8 H7.5 M10.5 7.5 L7.2 10.8 L10.5 14" stroke-width="1.3"/></g></svg><svg style="position:absolute;left:1502px;top:1054px" width="19" height="17" viewBox="0 0 19 17"><g fill="none" stroke="#f2f2f2" stroke-width="1.4"><path d="M9.6 5.6 V2 H0.9 V15.2 H9.6 V11.4"/></g><path d="M4 7 H11.4 V4.4 L18 8.6 L11.4 12.8 V10 H4Z" fill="#f2f2f2"/></svg><svg style="position:absolute;left:1523px;top:1053px" width="20" height="20" viewBox="0 0 20 20"><g fill="none" stroke="#f2f2f2" stroke-width="1.2"><rect x="3.9" y="0.9" width="14.6" height="14.6" rx="2.2"/><path d="M1.7 4.3 V15.8 Q1.7 18.6 4.5 18.6 H14.9" stroke="#d4d4d4"/><path d="M5.9 8.6 Q11.4 3.3 16.9 8.6 Q11.4 13.9 5.9 8.6Z" stroke-width="1"/><path d="M11.4 6.6 L13 8.3 L11.4 10.8 L9.8 8.3Z" stroke-width="0.9"/></g></svg><svg style="position:absolute;left:1206px;top:1083px" width="10" height="10" viewBox="0 0 10 10"><path d="M0.5 0.3 L8.8 4.9 L0.5 9.5Z" fill="#dcdcdc"/></svg><svg style="position:absolute;left:1222px;top:1080px" width="17" height="17" viewBox="0 0 17 17"><g fill="none" stroke="#eeeeee" stroke-width="1.1"><rect x="0.7" y="1.3" width="14.8" height="14" rx="2"/><rect x="2.8" y="4" width="10.6" height="8.4" rx="1.5"/></g></svg><div class="lt" style="left:1242px;top:1075px;height:26px;line-height:26px;letter-spacing:-0.27px">Template Canvas</div><svg style="position:absolute;left:1458px;top:1079px" width="18" height="18" viewBox="0 0 18 18"><g stroke="#f4f4f4" stroke-width="1" fill="none"><path d="M2.5 0.5 V17.5 M6.8 0.5 V17.5 M11.1 0.5 V17.5 M15.4 0.5 V17.5 M0.5 2.8 H17.5 M0.5 6.8 H17.5 M0.5 10.8 H17.5 M0.5 14.8 H17.5"/></g></svg><svg style="position:absolute;left:1481px;top:1079px" width="18" height="19" viewBox="0 0 18 19"><g stroke="#f2f2f2" fill="none" stroke-width="1.2"><path d="M0.8 0.8 H8.5 L13.2 5.5 V18.2 H0.8Z M8.5 0.8 V5.5 H13.2"/><path d="M16.5 10.8 H7.5 M10.5 7.5 L7.2 10.8 L10.5 14" stroke-width="1.3"/></g></svg><svg style="position:absolute;left:1502px;top:1080px" width="19" height="17" viewBox="0 0 19 17"><g fill="none" stroke="#f2f2f2" stroke-width="1.4"><path d="M9.6 5.6 V2 H0.9 V15.2 H9.6 V11.4"/></g><path d="M4 7 H11.4 V4.4 L18 8.6 L11.4 12.8 V10 H4Z" fill="#f2f2f2"/></svg><svg style="position:absolute;left:1523px;top:1079px" width="20" height="20" viewBox="0 0 20 20"><g fill="none" stroke="#f2f2f2" stroke-width="1.2"><rect x="3.9" y="0.9" width="14.6" height="14.6" rx="2.2"/><path d="M1.7 4.3 V15.8 Q1.7 18.6 4.5 18.6 H14.9" stroke="#d4d4d4"/><path d="M5.9 8.6 Q11.4 3.3 16.9 8.6 Q11.4 13.9 5.9 8.6Z" stroke-width="1"/><path d="M11.4 6.6 L13 8.3 L11.4 10.8 L9.8 8.3Z" stroke-width="0.9"/></g></svg><svg style="position:absolute;left:1205px;top:1109px" width="11" height="10" viewBox="0 0 11 10"><path d="M0.3 0.8 H10.2 L5.25 9.2Z" fill="#dcdcdc"/></svg><svg style="position:absolute;left:1222px;top:1106px" width="17" height="17" viewBox="0 0 17 17"><g fill="none" stroke="#eeeeee" stroke-width="1.1"><rect x="0.7" y="1.3" width="14.8" height="14" rx="2"/><rect x="2.8" y="4" width="10.6" height="8.4" rx="1.5"/></g></svg><div class="lt" style="left:1242px;top:1101px;height:26px;line-height:26px;letter-spacing:-0.17px">Artwork Canvas</div><svg style="position:absolute;left:1458px;top:1105px" width="18" height="18" viewBox="0 0 18 18"><g stroke="#f4f4f4" stroke-width="1" fill="none"><path d="M2.5 0.5 V17.5 M6.8 0.5 V17.5 M11.1 0.5 V17.5 M15.4 0.5 V17.5 M0.5 2.8 H17.5 M0.5 6.8 H17.5 M0.5 10.8 H17.5 M0.5 14.8 H17.5"/></g></svg><svg style="position:absolute;left:1481px;top:1105px" width="18" height="19" viewBox="0 0 18 19"><g stroke="#f2f2f2" fill="none" stroke-width="1.2"><path d="M0.8 0.8 H8.5 L13.2 5.5 V18.2 H0.8Z M8.5 0.8 V5.5 H13.2"/><path d="M16.5 10.8 H7.5 M10.5 7.5 L7.2 10.8 L10.5 14" stroke-width="1.3"/></g></svg><svg style="position:absolute;left:1502px;top:1106px" width="19" height="17" viewBox="0 0 19 17"><g fill="none" stroke="#f2f2f2" stroke-width="1.4"><path d="M9.6 5.6 V2 H0.9 V15.2 H9.6 V11.4"/></g><path d="M4 7 H11.4 V4.4 L18 8.6 L11.4 12.8 V10 H4Z" fill="#f2f2f2"/></svg><svg style="position:absolute;left:1523px;top:1105px" width="20" height="20" viewBox="0 0 20 20"><g fill="none" stroke="#f2f2f2" stroke-width="1.2"><rect x="3.9" y="0.9" width="14.6" height="14.6" rx="2.2"/><path d="M1.7 4.3 V15.8 Q1.7 18.6 4.5 18.6 H14.9" stroke="#d4d4d4"/><path d="M5.9 8.6 Q11.4 3.3 16.9 8.6 Q11.4 13.9 5.9 8.6Z" stroke-width="1"/><path d="M11.4 6.6 L13 8.3 L11.4 10.8 L9.8 8.3Z" stroke-width="0.9"/></g></svg><div style="position:absolute;left:1196px;top:1128px;width:357px;height:25px;background:#4d5e72;border-radius:6px"></div><svg style="position:absolute;left:1210px;top:1136px" width="11" height="10" viewBox="0 0 11 10"><path d="M0.3 0.8 H10.2 L5.25 9.2Z" fill="#dcdcdc"/></svg><svg style="position:absolute;left:1228px;top:1132px" width="17" height="17" viewBox="0 0 17 17"><g fill="none" stroke="#eeeeee" stroke-width="1.1"><rect x="0.7" y="1.3" width="14.8" height="14" rx="2"/><rect x="2.8" y="4" width="10.6" height="8.4" rx="1.5"/></g></svg><div class="lt" style="left:1248px;top:1127px;height:26px;line-height:26px;letter-spacing:-0.45px">Canvas 1</div><svg style="position:absolute;left:1458px;top:1131px" width="18" height="18" viewBox="0 0 18 18"><g stroke="#f4f4f4" stroke-width="1" fill="none"><path d="M2.5 0.5 V17.5 M6.8 0.5 V17.5 M11.1 0.5 V17.5 M15.4 0.5 V17.5 M0.5 2.8 H17.5 M0.5 6.8 H17.5 M0.5 10.8 H17.5 M0.5 14.8 H17.5"/></g></svg><svg style="position:absolute;left:1482px;top:1131px" width="15" height="19" viewBox="0 0 15 19"><g stroke="#e4e4e4" fill="none" stroke-width="1"><path d="M0.5 0.5 H9.3 L13.5 4.7 V18.5 H0.5Z M9.3 0.5 V4.7 H13.5"/><path d="M5.3 9.4 L2.6 12.2 L5.3 15 M8.7 9.4 L11.4 12.2 L8.7 15" stroke="#f4f4f4" stroke-width="1.4"/></g></svg><svg style="position:absolute;left:1502px;top:1132px" width="19" height="17" viewBox="0 0 19 17"><g fill="none" stroke="#f2f2f2" stroke-width="1.4"><path d="M9.6 5.6 V2 H0.9 V15.2 H9.6 V11.4"/></g><path d="M4 7 H11.4 V4.4 L18 8.6 L11.4 12.8 V10 H4Z" fill="#f2f2f2"/></svg><svg style="position:absolute;left:1523px;top:1131px" width="20" height="20" viewBox="0 0 20 20"><g fill="none" stroke="#f2f2f2" stroke-width="1.2"><rect x="3.9" y="0.9" width="14.6" height="14.6" rx="2.2"/><path d="M1.7 4.3 V15.8 Q1.7 18.6 4.5 18.6 H14.9" stroke="#d4d4d4"/><path d="M5.9 8.6 Q11.4 3.3 16.9 8.6 Q11.4 13.9 5.9 8.6Z" stroke-width="1"/><path d="M11.4 6.6 L13 8.3 L11.4 10.8 L9.8 8.3Z" stroke-width="0.9"/></g></svg><div style="position:absolute;left:1196px;top:1154px;width:357px;height:25px;background:#4374c6;border-radius:6px"></div><svg style="position:absolute;left:1242px;top:1158px" width="13" height="18" viewBox="0 0 13 18"><path d="M0.6 0.6 H8.2 L11.6 4 V16.4 H0.6Z M8.2 0.6 V4 H11.6" fill="none" stroke="#f0f4fa" stroke-width="1"/></svg><div class="lt" style="left:1260px;top:1153px;height:26px;line-height:26px;letter-spacing:0.1px">Artboard 1</div><div style="position:absolute;left:1451px;top:1157px;width:70px;height:19px;background:#787878"></div><div class="lt" style="left:1459px;top:1157px;height:19px;line-height:19px;letter-spacing:-0.2px;color:#f4f4f4">0.0°</div><svg style="position:absolute;left:1503px;top:1161px" width="14" height="9" viewBox="0 0 14 9"><path d="M1 1.5 L7 7.5 L13 1.5" fill="none" stroke="#f0f0f0" stroke-width="1.4"/></svg><svg style="position:absolute;left:1524px;top:1157px" width="18" height="18" viewBox="0 0 18 18"><g stroke="#f4f4f4" stroke-width="1" fill="none"><path d="M2.5 0.5 V17.5 M6.8 0.5 V17.5 M11.1 0.5 V17.5 M15.4 0.5 V17.5 M0.5 2.8 H17.5 M0.5 6.8 H17.5 M0.5 10.8 H17.5 M0.5 14.8 H17.5"/></g></svg>
<div class="a" style="left:1557px;top:1049px;width:5px;height:197px;background:#999999;border-radius:3px 0 0 3px"></div>
<div class="a" style="left:1195px;top:1258px;width:367px;height:2px;background:#393939"></div>
<svg style="position:absolute;left:1410px;top:1271px" width="17" height="18" viewBox="0 0 17 18"><g stroke="#f2f2f2" stroke-width="1.1" fill="none"><line x1="0.5" y1="3.5" x2="16" y2="3.5"/><line x1="0.5" y1="9" x2="16" y2="9" stroke="#bbb" stroke-width="1.6"/><line x1="0.5" y1="14.5" x2="16" y2="14.5"/><circle cx="4.6" cy="3.5" r="1.8" fill="#434343"/><circle cx="11.9" cy="9" r="1.8" fill="#434343"/><circle cx="6.9" cy="14.5" r="1.8" fill="#434343"/></g></svg><svg style="position:absolute;left:1437px;top:1271px" width="18" height="18" viewBox="0 0 18 18"><g stroke="#f4f4f4" stroke-width="1" fill="none"><path d="M2.5 0.5 V17.5 M6.8 0.5 V17.5 M11.1 0.5 V17.5 M15.4 0.5 V17.5 M0.5 2.8 H17.5 M0.5 6.8 H17.5 M0.5 10.8 H17.5 M0.5 14.8 H17.5"/></g></svg><svg style="position:absolute;left:1464px;top:1270px" width="20" height="20" viewBox="0 0 20 20"><g stroke="#f2f2f2" fill="none" stroke-width="1.3"><path d="M3.5 17 Q1 17 1 14.5 V3 Q1 1 3 1 H14 Q15.5 1 15.8 3"/><rect x="3.6" y="3.6" width="14.6" height="15.4" rx="1.8"/><path d="M10.9 8 V14 M7.9 11 H13.9" stroke-width="1.6"/></g></svg><svg style="position:absolute;left:1494px;top:1270px" width="16" height="20" viewBox="0 0 16 20"><g stroke="#f2f2f2" fill="none" stroke-width="1.3"><path d="M2.5 1 H10 L15 6 V17.5 Q15 19 13.5 19 H2.5 Q1 19 1 17.5 V2.5 Q1 1 2.5 1Z M10 1 Q10 6 15 6"/><path d="M8 10.5 V16 M5.2 13.2 H10.8" stroke-width="1.6"/></g></svg><svg style="position:absolute;left:1520px;top:1270px" width="20" height="20" viewBox="0 0 20 20"><g stroke="#cfcfcf" fill="none" stroke-width="1.3"><rect x="1.2" y="1.2" width="16.8" height="17.6" rx="3.2"/><path d="M9.6 5 V15 M4.6 10 H14.6" stroke="#e8e8e8" stroke-width="1.6"/></g></svg><svg style="position:absolute;left:1549px;top:1270px" width="13" height="20" viewBox="0 0 13 20"><g stroke="#f2f2f2" fill="none" stroke-width="1.2"><path d="M0.5 3.5 H13 M4.5 3.5 V1.5 H10 V3.5 M2 3.5 L3 19 H13 M5 6 V17 M8 6 V17 M11 6 V17"/></g></svg>
</body></html>
